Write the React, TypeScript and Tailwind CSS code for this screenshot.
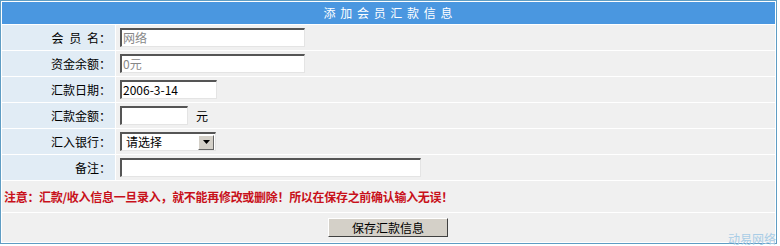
import React from "react";

const font = { fontFamily: '"Noto Sans CJK SC", "Noto Sans", sans-serif' };

const Label: React.FC<{ text: string; wide?: boolean }> = ({ text, wide }) => (
  <div
    className={`flex h-[25px] items-center justify-end bg-[#e1ecf5] pr-[4px] text-[12px] text-black ${
      wide ? "[word-spacing:3px]" : ""
    }`}
  >
    {text}
  </div>
);

const Cell: React.FC<{ children?: React.ReactNode }> = ({ children }) => (
  <div className="flex h-[25px] items-center bg-[#f0f0f0] pl-[4px] text-[12px]">{children}</div>
);

// classic inset text box
const boxCls =
  "flex h-[19px] items-center border-t-2 border-l-2 border-b border-r border-t-[#555] border-l-[#555] border-b-[#e4e4e4] border-r-[#e4e4e4] bg-white px-[1px] text-[12px] leading-none";

export default function App() {
  return (
    <div className="relative h-[246px] w-[780px] bg-white" style={font}>
      <div className="w-[777px] border border-[#5f9dc4] bg-white p-px">
        <div className="grid grid-cols-[113px_1fr] gap-px bg-white">
          {/* header */}
          <div className="col-span-2 flex h-[22px] items-center justify-center bg-[#4a97e0] text-[12px] tracking-[1px] text-white">
            添 加 会 员 汇 款 信 息
          </div>

          <Label text="会 员 名：" wide />
          <Cell>
            <div className={`${boxCls} w-[185px] text-[#888]`}>网络</div>
          </Cell>

          <Label text="资金余额：" />
          <Cell>
            <div className={`${boxCls} w-[185px] text-[#888]`}>0元</div>
          </Cell>

          <Label text="汇款日期：" />
          <Cell>
            <div className={`${boxCls} w-[97px] text-black`}>2006-3-14</div>
          </Cell>

          <Label text="汇款金额：" />
          <Cell>
            <div className={`${boxCls} w-[68px]`}></div>
            <span className="ml-[8px] text-black">元</span>
          </Cell>

          <Label text="汇入银行：" />
          <Cell>
            <div className={`${boxCls} w-[96px] justify-between pl-[4px] pr-[1px] text-black`}>
              <span>请选择</span>
              <span className="flex h-[15px] w-[16px] items-center justify-center border border-t-white border-l-white border-b-[#666] border-r-[#666] bg-[#d4d0c8]">
                <svg width="7" height="4" viewBox="0 0 7 4">
                  <path d="M0 0h7L3.5 4z" fill="#000" />
                </svg>
              </span>
            </div>
          </Cell>

          <Label text="备注：" />
          <Cell>
            <div className={`${boxCls} w-[301px]`}></div>
          </Cell>

          {/* note */}
          <div className="col-span-2 flex h-[31px] items-center bg-[#f0f0f0] pl-[2px] text-[12px] font-bold tracking-[-0.3px] text-[#c8101a]">
            注意：汇款/收入信息一旦录入，就不能再修改或删除！所以在保存之前确认输入无误！
          </div>

          {/* submit */}
          <div className="col-span-2 flex h-[29px] items-center bg-[#f0f0f0] pl-[326px]">
            <button
              type="button"
              className="h-[19px] w-[120px] border border-t-white border-l-white border-b-[#404040] border-r-[#404040] bg-[#d4d0c8] text-[12px] leading-none text-black"
            >
              保存汇款信息
            </button>
          </div>
        </div>
      </div>

      {/* watermark */}
      <div className="absolute right-[4px] bottom-[1px] text-[12px] leading-none text-[#a9cde6]">动易网络</div>
    </div>
  );
}
